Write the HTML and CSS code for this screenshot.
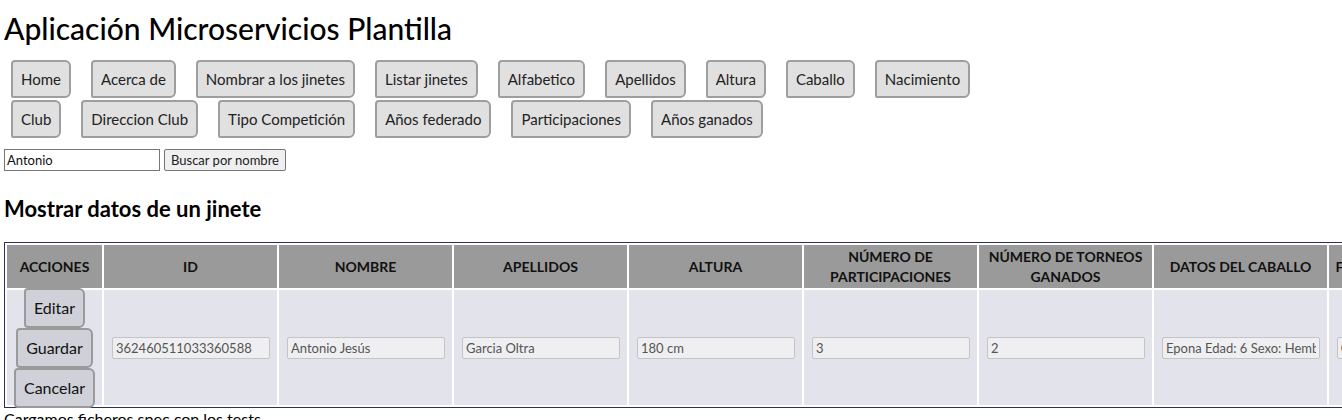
FILE: index.html
```html
<!DOCTYPE html>
<html lang="es">
<head>
<meta charset="utf-8">
<title>Aplicación Microservicios Plantilla</title>
<link rel="stylesheet" href="styles.css">
</head>
<body>
<h1 class="title">Aplicación Microservicios Plantilla</h1>
<nav class="nav">
  <div class="nav-row">
    <a class="nav-btn">Home</a>
    <a class="nav-btn">Acerca de</a>
    <a class="nav-btn">Nombrar a los jinetes</a>
    <a class="nav-btn">Listar jinetes</a>
    <a class="nav-btn">Alfabetico</a>
    <a class="nav-btn">Apellidos</a>
    <a class="nav-btn">Altura</a>
    <a class="nav-btn">Caballo</a>
    <a class="nav-btn">Nacimiento</a>
  </div>
  <div class="nav-row">
    <a class="nav-btn">Club</a>
    <a class="nav-btn">Direccion Club</a>
    <a class="nav-btn">Tipo Competición</a>
    <a class="nav-btn">Años federado</a>
    <a class="nav-btn">Participaciones</a>
    <a class="nav-btn">Años ganados</a>
  </div>
</nav>
<div class="search">
  <input class="search-input" type="text" value="Antonio">
  <button class="search-btn">Buscar por nombre</button>
</div>
<h2 class="subtitle">Mostrar datos de un jinete</h2>
<table class="data">
  <colgroup>
    <col class="c-actions">
    <col class="c-data"><col class="c-data"><col class="c-data"><col class="c-data">
    <col class="c-data"><col class="c-data"><col class="c-data"><col class="c-data">
  </colgroup>
  <thead>
    <tr>
      <th>ACCIONES</th>
      <th>ID</th>
      <th>NOMBRE</th>
      <th>APELLIDOS</th>
      <th>ALTURA</th>
      <th>NÚMERO DE PARTICIPACIONES</th>
      <th>NÚMERO DE TORNEOS GANADOS</th>
      <th>DATOS DEL CABALLO</th>
      <th>FECHA DE NACIMIENTO</th>
    </tr>
  </thead>
  <tbody>
    <tr>
      <td class="cell-actions">
        <div class="actions">
          <button class="act-btn">Editar</button>
          <button class="act-btn">Guardar</button>
          <button class="act-btn">Cancelar</button>
        </div>
      </td>
      <td><input class="cell-input" type="text" value="362460511033360588" readonly></td>
      <td><input class="cell-input" type="text" value="Antonio Jesús" readonly></td>
      <td><input class="cell-input" type="text" value="Garcia Oltra" readonly></td>
      <td><input class="cell-input" type="text" value="180 cm" readonly></td>
      <td><input class="cell-input" type="text" value="3" readonly></td>
      <td><input class="cell-input" type="text" value="2" readonly></td>
      <td><input class="cell-input" type="text" value="Epona Edad: 6 Sexo: Hembra" readonly></td>
      <td><input class="cell-input" type="text" value="06/05/1990" readonly></td>
    </tr>
  </tbody>
</table>
<p class="footer-note">Cargamos ficheros spec con los tests</p>
</body>
</html>
```
FILE: styles.css
```css
html, body {
  margin: 0;
  padding: 0;
}
body {
  padding: 0 4px;
  font-family: Lato, "Open Sans", sans-serif;
  color: #000;
  background: #fff;
}
.title {
  margin: 8px 0 12px;
  font-size: 30px;
  font-weight: 500;
  line-height: 40px;
}
.nav {
  display: flex;
  flex-direction: column;
  row-gap: 2px;
  margin-left: 7px;
}
.nav-row {
  display: flex;
  column-gap: 20px;
}
.nav-btn {
  display: flex;
  align-items: center;
  height: 38px;
  box-sizing: border-box;
  padding: 0 8px;
  border: 2px solid #9e9e9e;
  border-radius: 4px 6px 6px 2px;
  background: #e0e0e0;
  color: #222;
  font-size: 15px;
}
.search {
  display: flex;
  gap: 4px;
  margin-top: 11px;
}
.search-input {
  width: 156px;
  height: 22px;
  box-sizing: border-box;
  margin: 0;
  padding: 1px 2px;
  border: 1px solid #767676;
  font-family: inherit;
  font-size: 13px;
  color: #111;
}
.search-btn {
  height: 22px;
  box-sizing: border-box;
  margin: 0;
  padding: 0 6px;
  border: 1px solid #767676;
  border-radius: 2px;
  background: #efefef;
  font-family: inherit;
  font-size: 13px;
  color: #222;
}
.subtitle {
  margin: 24px 0 19px;
  font-size: 22px;
  font-weight: 700;
  line-height: 28px;
}
.data {
  border: 1px solid #2e2e5c;
  border-spacing: 2px;
  table-layout: fixed;
  width: 1501px;
}
.c-actions {
  width: 95px;
}
.c-data {
  width: 173px;
}
.data th {
  height: 43px;
  padding: 0 4px;
  box-sizing: border-box;
  background: #9a9a9a;
  color: #111;
  font-size: 14px;
  font-weight: 700;
  line-height: 20px;
  text-align: center;
}
.data td {
  height: 115px;
  box-sizing: border-box;
  padding: 0 7px 0 8px;
  background: #e3e3ec;
  vertical-align: middle;
}
.data td.cell-actions {
  padding: 0;
}
.actions {
  display: flex;
  flex-direction: column;
  align-items: center;
  justify-content: center;
  height: 115px;
}
.act-btn {
  flex-shrink: 0;
  height: 40px;
  box-sizing: border-box;
  margin: 0;
  padding: 0 8px;
  border: 2px solid #9a9a9a;
  border-radius: 4px 6px 6px 4px;
  background: #d0d0d8;
  color: #111;
  font-family: inherit;
  font-size: 16px;
}
.cell-input {
  width: 100%;
  height: 22px;
  box-sizing: border-box;
  margin: 0;
  padding: 1px 3px;
  border: 1px solid #c4c4c8;
  border-radius: 2px;
  background: #efeff1;
  font-family: inherit;
  font-size: 13px;
  color: #555;
}
.footer-note {
  margin: 1px 0 0;
  font-size: 16px;
}
```
